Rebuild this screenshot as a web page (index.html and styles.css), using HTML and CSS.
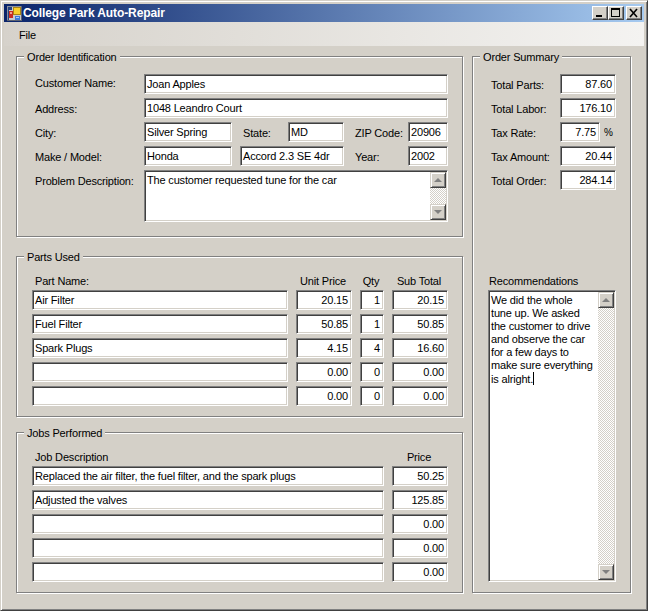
FILE: index.html
```html
<!DOCTYPE html>
<html lang="en">
<head>
<meta charset="utf-8">
<title>College Park Auto-Repair</title>
<link rel="stylesheet" href="styles.css">
</head>
<body>
<div class="window">
  <div class="titlebar">
    <svg class="appicon" width="15" height="15" viewBox="0 0 15 15" shape-rendering="crispEdges">
      <rect width="15" height="15" fill="#c9c9cc"/>
      <rect x="0" y="0" width="15" height="1" fill="#8a8f9c"/>
      <rect x="0" y="0" width="1" height="15" fill="#8a8f9c"/>
      <rect x="14" y="0" width="1" height="15" fill="#5c6270"/>
      <rect x="0" y="14" width="15" height="1" fill="#5c6270"/>
      <rect x="1" y="1" width="4" height="3" fill="#26437e"/>
      <rect x="1" y="4" width="1" height="10" fill="#26437e"/>
      <rect x="2" y="5" width="4" height="7" fill="#c92a22"/>
      <rect x="3" y="6" width="2" height="2" fill="#f0a090"/>
      <rect x="6" y="1" width="8" height="8" fill="#a88414"/>
      <rect x="7" y="2" width="6" height="6" fill="#f9cf2b"/>
      <rect x="8" y="10" width="5" height="4" fill="#3f7bd8"/>
      <rect x="9" y="11" width="3" height="1" fill="#a8ccf5"/>
    </svg>
    <span class="title">College Park Auto-Repair</span>
    <div class="winbtns">
      <div class="winbtn"><svg width="12" height="10" viewBox="0 0 12 10"><rect x="2" y="7" width="6" height="2"/></svg></div>
      <div class="winbtn"><svg width="12" height="10" viewBox="0 0 12 10"><path d="M1 0h9v9H1z M2 2v6h7V2z" fill-rule="evenodd"/></svg></div>
      <div class="winbtn winbtn-close"><svg width="12" height="10" viewBox="0 0 12 10"><path d="M2 1l7 8M9 1L2 9" stroke="#000" stroke-width="1.6" fill="none"/></svg></div>
    </div>
  </div>
  <div class="menubar"><span class="menuitem">File</span></div>
  <div class="main">
    <div class="leftcol">
      <section class="group group-order">
        <span class="legend">Order Identification</span>
        <div class="order-grid">
          <div class="lbl lbl-up">Customer Name:</div><div class="field span-all">Joan Apples</div>
          <div class="lbl">Address:</div><div class="field span-all">1048 Leandro Court</div>
          <div class="lbl">City:</div><div class="field">Silver Spring</div><div></div><div class="lbl lbl-state">State:</div><div class="field">MD</div><div></div><div class="lbl">ZIP Code:</div><div class="field">20906</div>
          <div class="lbl">Make / Model:</div><div class="field">Honda</div><div></div><div class="field span-2">Accord 2.3 SE 4dr</div><div></div><div class="lbl">Year:</div><div class="field">2002</div>
          <div class="lbl lbl-top">Problem Description:</div>
          <div class="field memo span-all"><div class="memotext">The customer requested tune for the car</div>
            <div class="scrollbar"><div class="sbtn"><i class="arrow-up"></i></div><div class="strack"></div><div class="sbtn"><i class="arrow-down"></i></div></div>
          </div>
        </div>
      </section>
      <section class="group group-parts">
        <span class="legend">Parts Used</span>
        <div class="parts-grid">
          <div class="hdr hdr-name">Part Name:</div><div class="hdr hdr-c">Unit Price</div><div class="hdr hdr-c">Qty</div><div class="hdr hdr-c">Sub Total</div>
          <div class="field">Air Filter</div><div class="field num">20.15</div><div class="field num">1</div><div class="field num">20.15</div>
          <div class="field">Fuel Filter</div><div class="field num">50.85</div><div class="field num">1</div><div class="field num">50.85</div>
          <div class="field">Spark Plugs</div><div class="field num">4.15</div><div class="field num">4</div><div class="field num">16.60</div>
          <div class="field"></div><div class="field num">0.00</div><div class="field num">0</div><div class="field num">0.00</div>
          <div class="field"></div><div class="field num">0.00</div><div class="field num">0</div><div class="field num">0.00</div>
        </div>
      </section>
      <section class="group group-jobs">
        <span class="legend">Jobs Performed</span>
        <div class="jobs-grid">
          <div class="hdr hdr-name">Job Description</div><div class="hdr hdr-c">Price</div>
          <div class="field">Replaced the air filter, the fuel filter, and the spark plugs</div><div class="field num">50.25</div>
          <div class="field">Adjusted the valves</div><div class="field num">125.85</div>
          <div class="field"></div><div class="field num">0.00</div>
          <div class="field"></div><div class="field num">0.00</div>
          <div class="field"></div><div class="field num">0.00</div>
        </div>
      </section>
    </div>
    <section class="group group-summary">
      <span class="legend">Order Summary</span>
      <div class="summary-grid">
        <div class="lbl">Total Parts:</div><div class="field num">87.60</div>
        <div class="lbl">Total Labor:</div><div class="field num">176.10</div>
        <div class="lbl">Tax Rate:</div><div class="rate"><div class="field num">7.75</div><span class="pct">%</span></div>
        <div class="lbl">Tax Amount:</div><div class="field num">20.44</div>
        <div class="lbl">Total Order:</div><div class="field num">284.14</div>
      </div>
      <div class="rec-label">Recommendations</div>
      <div class="field memo rec"><div class="memotext">We did the whole<br>tune up. We asked<br>the customer to drive<br>and observe the car<br>for a few days to<br>make sure everything<br>is alright.<span class="caret"></span></div>
        <div class="scrollbar"><div class="sbtn"><i class="arrow-up"></i></div><div class="strack"></div><div class="sbtn"><i class="arrow-down"></i></div></div>
      </div>
    </section>
  </div>
</div>
</body>
</html>
```
FILE: styles.css
```css
* { box-sizing: border-box; }
html, body { margin: 0; padding: 0; }
body {
  width: 648px;
  height: 611px;
  overflow: hidden;
  background: #d4d0c8;
  font-family: "Liberation Sans", Arial, sans-serif;
  font-size: 11px;
  letter-spacing: -0.17px;
  color: #000;
}
.window {
  width: 648px;
  height: 611px;
  display: flex;
  flex-direction: column;
  background: #d4d0c8;
  border: 4px solid #d4d0c8;
  position: relative;
}
.window::after {
  content: "";
  position: absolute;
  inset: -4px;
  pointer-events: none;
  border: 1px solid;
  border-color: #d4d0c8 #404040 #404040 #d4d0c8;
  box-shadow: inset 1px 1px 0 #fff, inset -1px -1px 0 #808080;
}
.titlebar {
  height: 18px;
  flex: none;
  display: flex;
  align-items: center;
  padding-left: 3px;
  background: linear-gradient(90deg, #0a246a, #a6caf0);
  color: #fff;
}
.appicon { flex: none; }
.title {
  margin-left: 1px;
  font-weight: bold;
  font-size: 12px;
  letter-spacing: -0.1px;
  white-space: nowrap;
}
.winbtns { margin-left: auto; display: flex; margin-right: 2px; }
.winbtn {
  width: 16px;
  height: 14px;
  display: flex;
  align-items: center;
  justify-content: center;
  background: #d4d0c8;
  border: 1px solid;
  border-color: #fff #404040 #404040 #fff;
  box-shadow: inset -1px -1px 0 #808080;
}
.winbtn-close { margin-left: 2px; }
.menubar {
  height: 24px;
  flex: none;
  display: flex;
  align-items: center;
  padding-left: 15px;
  padding-top: 1px;
  background: linear-gradient(90deg, #d6d2cb, #f4f3f1);
}
.main {
  flex: 1;
  display: flex;
  gap: 9px;
  padding: 10px 12px 14px;
}
.leftcol {
  width: 447px;
  display: flex;
  flex-direction: column;
}
.group {
  position: relative;
  border: 1px solid #808080;
  box-shadow: inset 1px 1px 0 #fff, 1px 1px 0 #fff;
}
.legend {
  position: absolute;
  top: -6px;
  left: 7px;
  padding: 0 3px;
  background: #d4d0c8;
  line-height: 13px;
  white-space: nowrap;
}
.group-order { height: 181px; padding: 17px 0 0 18px; }
.group-parts { height: 161px; margin-top: 19px; padding: 16px 0 0 15px; }
.group-jobs { height: 161px; margin-top: 15px; padding: 16px 0 0 15px; }
.group-summary {
  width: 159px;
  display: flex;
  flex-direction: column;
  padding: 17px 0 0 15px;
}
.order-grid {
  display: grid;
  grid-template-columns: 109px 88px 8px 48px 56px 11px 53px 40px;
  row-gap: 4px;
  grid-template-rows: 20px 20px 20px 20px 52px;
}
.span-all { grid-column: 2 / -1; }
.span-2 { grid-column: span 2; }
.lbl {
  display: flex;
  align-items: center;
  padding-top: 1px;
  white-space: nowrap;
}
.lbl-up { padding: 0 0 3px; }
.lbl-top { align-items: flex-start; padding: 5px 0 0; }
.lbl-state { padding-left: 3px; }
.field {
  background: #fff;
  border: 1px solid;
  border-color: #808080 #fff #fff #808080;
  box-shadow: inset 1px 1px 0 #404040, inset -1px -1px 0 #d4d0c8;
  height: 20px;
  line-height: 18px;
  padding: 0 3px 0 2px;
  white-space: nowrap;
  overflow: hidden;
}
.num { text-align: right; }
.memo {
  display: flex;
  height: auto;
  padding: 1px 1px 1px 2px;
  overflow: hidden;
}
.memotext {
  flex: 1;
  line-height: 13px;
  padding-top: 2px;
}
.scrollbar {
  width: 16px;
  flex: none;
  display: flex;
  flex-direction: column;
}
.strack {
  flex: 1;
  background: conic-gradient(#fff 25%, #d4d0c8 0 50%, #fff 0 75%, #d4d0c8 0) 0 0 / 2px 2px;
}
.sbtn {
  height: 16px;
  flex: none;
  background: #d4d0c8;
  border: 1px solid;
  border-color: #d4d0c8 #404040 #404040 #d4d0c8;
  box-shadow: inset 1px 1px 0 #fff, inset -1px -1px 0 #808080;
  display: flex;
  align-items: center;
  justify-content: center;
}
.arrow-up, .arrow-down {
  width: 0;
  height: 0;
  border-left: 4px solid transparent;
  border-right: 4px solid transparent;
}
.arrow-up { border-bottom: 4px solid #808080; }
.arrow-down { border-top: 4px solid #808080; }
.parts-grid {
  display: grid;
  grid-template-columns: 256px 56px 24px 56px;
  column-gap: 8px;
  row-gap: 4px;
  grid-template-rows: 13px repeat(5, 20px);
}
.jobs-grid {
  display: grid;
  grid-template-columns: 352px 56px;
  column-gap: 8px;
  row-gap: 4px;
  grid-template-rows: 13px repeat(5, 20px);
}
.hdr { line-height: 13px; padding-top: 2px; white-space: nowrap; }
.hdr-name { padding-left: 3px; }
.hdr-c { text-align: center; padding-right: 2px; }
.summary-grid {
  display: grid;
  grid-template-columns: 69px 56px;
  row-gap: 4px;
  grid-auto-rows: 20px;
  margin-left: 3px;
}
.rate { display: flex; align-items: center; }
.rate .field { width: 40px; }
.pct { margin-left: 4px; font-size: 10px; }
.rec-label { margin-top: 85px; line-height: 13px; margin-bottom: 2px; padding-left: 1px; }
.rec { width: 128px; height: 292px; }
.caret {
  display: inline-block;
  width: 1px;
  height: 13px;
  background: #000;
  vertical-align: -2px;
}
.menuitem { white-space: nowrap; }
```
